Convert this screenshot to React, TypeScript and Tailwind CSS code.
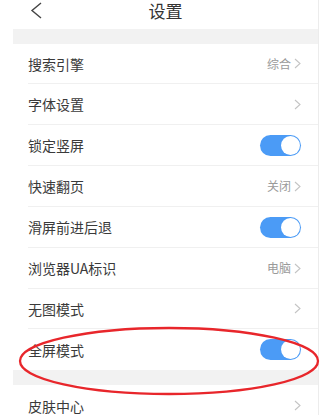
import React from "react";

const font = { fontFamily: '"Noto Sans CJK SC", "Noto Sans", sans-serif' };

function Chevron() {
  return (
    <svg width="7" height="11" viewBox="0 0 7 11" className="ml-[3px]">
      <polyline points="1,1 6,5.5 1,10" fill="none" stroke="#c4c4c4" strokeWidth="1.1" />
    </svg>
  );
}

function Toggle() {
  return (
    <div className="w-[41px] h-[21px] rounded-full bg-[#4b9bf6] flex items-center justify-end pr-[1px]">
      <div className="w-[19px] h-[19px] rounded-full bg-white" />
    </div>
  );
}

type Row = { label: string; value?: string; arrow?: boolean; toggle?: boolean; h: string; sep: boolean };

const rows: Row[] = [
  { label: "搜索引擎", value: "综合", arrow: true, h: "h-[40px]", sep: true },
  { label: "字体设置", arrow: true, h: "h-[41px]", sep: true },
  { label: "锁定竖屏", toggle: true, h: "h-[41px]", sep: true },
  { label: "快速翻页", value: "关闭", arrow: true, h: "h-[41px]", sep: true },
  { label: "滑屏前进后退", toggle: true, h: "h-[41px]", sep: true },
  { label: "浏览器UA标识", value: "电脑", arrow: true, h: "h-[41px]", sep: true },
  { label: "无图模式", arrow: true, h: "h-[40px]", sep: true },
  { label: "全屏模式", toggle: true, h: "h-[41px]", sep: false },
];

function SettingRow({ r }: { r: Row }) {
  return (
    <div className={`${r.h} shrink-0 ml-[15px] pr-[17px] flex items-center justify-between ${r.sep ? "border-b border-[#f0f0f0]" : ""}`}>
      <span className="text-[14px] text-[#3a3a3a] leading-[18px]">{r.label}</span>
      <div className="flex items-center">
        {r.value && <span className="text-[12px] text-[#9a9a9a] leading-[16px]">{r.value}</span>}
        {r.arrow && <Chevron />}
        {r.toggle && <Toggle />}
      </div>
    </div>
  );
}

export default function App() {
  return (
    <div className="relative w-[328px] h-[415px] overflow-hidden bg-white flex" style={font}>
      <div className="ml-[13px] w-[306px] border-r border-[#ececec] flex flex-col shrink-0">
        <div className="h-[29px] shrink-0 relative flex items-start justify-center">
          <svg width="13" height="17" viewBox="0 0 13 17" className="absolute left-[17px] top-[2px]">
            <polyline points="11,1 2,8.5 11,16" fill="none" stroke="#444" strokeWidth="1.4" />
          </svg>
          <span className="text-[17px] text-[#333] leading-[21px]">设置</span>
        </div>
        <div className="h-[15px] shrink-0 bg-[#f2f2f2]" />
        {rows.map((r) => (
          <SettingRow key={r.label} r={r} />
        ))}
        <div className="h-[15px] shrink-0 bg-[#f2f2f2]" />
        <SettingRow r={{ label: "皮肤中心", arrow: true, h: "h-[41px]", sep: false }} />
      </div>
      <svg className="absolute left-0 top-0 pointer-events-none" width="328" height="415">
        <ellipse cx="169" cy="361" rx="149" ry="33" fill="none" stroke="#e8262b" strokeWidth="2.3" />
      </svg>
    </div>
  );
}
